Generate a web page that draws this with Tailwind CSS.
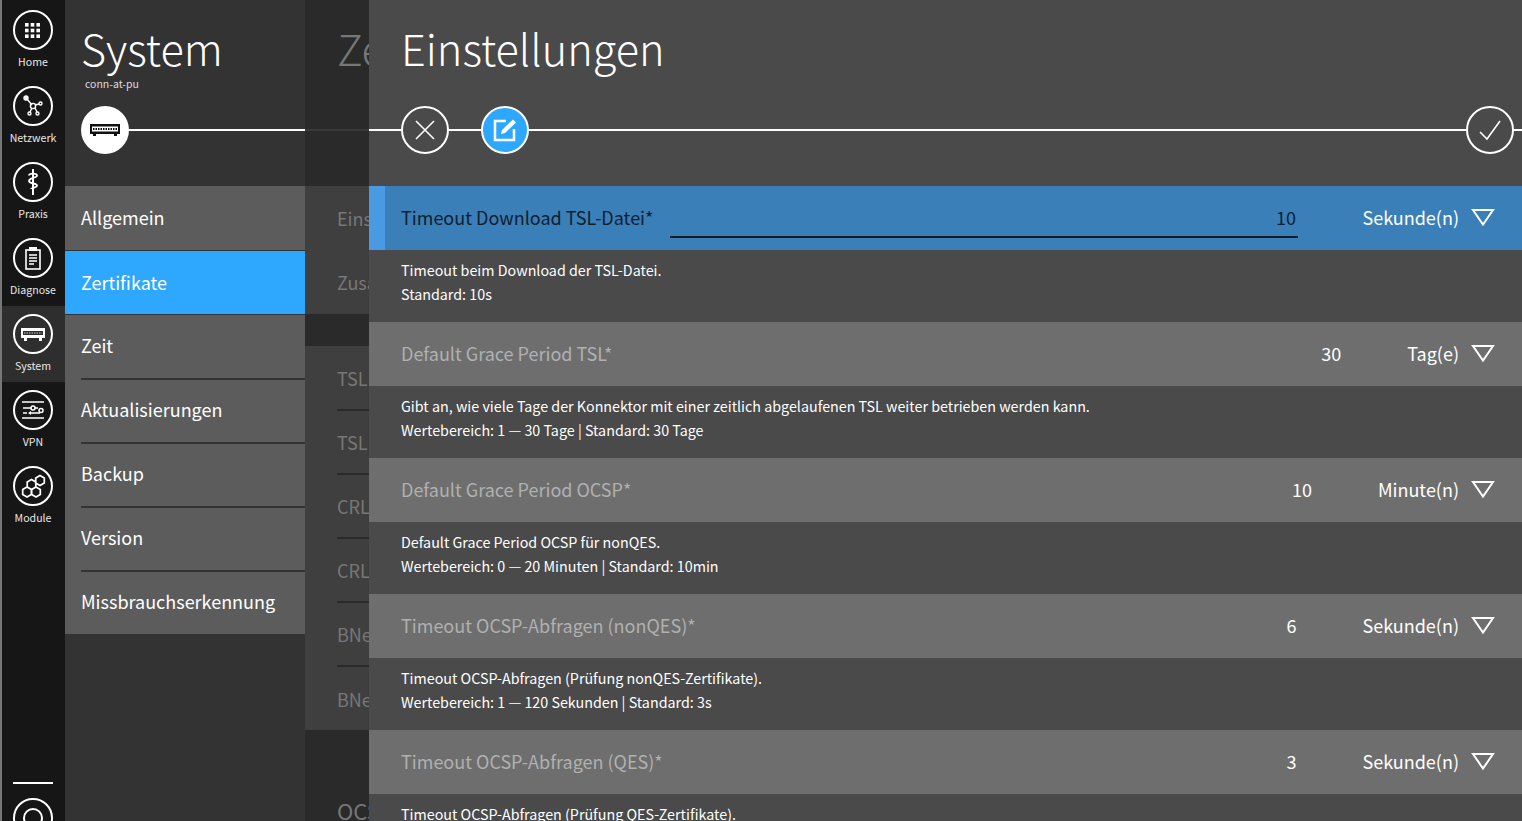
<!DOCTYPE html>
<html lang="en">
<head>
    <meta charset="UTF-8">
    <title>Einstellungen</title>
    <script src="https://cdn.jsdelivr.net/npm/@tailwindcss/browser@4"></script>
</head>
<body class="bg-[#161616] overflow-hidden font-['Noto_Sans_CJK_SC','Noto_Sans',sans-serif]">
<div class="flex h-[821px] w-[1522px] overflow-hidden">

    <!-- icon bar -->
    <nav class="w-[65px] shrink-0 bg-[#161616] border-l-2 border-[#777] pt-[2px] text-[#e8e8e8] overflow-hidden">
        <a class="flex flex-col items-center h-[76px] pt-2 -ml-[2px] text-[10.6px]">
            <span class="w-10 h-10 rounded-full border-2 border-white flex items-center justify-center">
                <svg width="15" height="15" viewBox="0 0 15 15" fill="#fff"><rect width="3.600" height="3.600"/><rect x="5.700" width="3.600" height="3.600"/><rect x="11.400" width="3.600" height="3.600"/><rect y="5.700" width="3.600" height="3.600"/><rect x="5.700" y="5.700" width="3.600" height="3.600"/><rect x="11.400" y="5.700" width="3.600" height="3.600"/><rect y="11.400" width="3.600" height="3.600"/><rect x="5.700" y="11.400" width="3.600" height="3.600"/><rect x="11.400" y="11.400" width="3.600" height="3.600"/></svg>
            </span>
            <span class="mt-1 pl-px leading-4">Home</span>
        </a>
        <a class="flex flex-col items-center h-[76px] pt-2 -ml-[2px] text-[10.6px]">
            <span class="w-10 h-10 rounded-full border-2 border-white flex items-center justify-center">
                <svg width="22" height="22" viewBox="0 0 22 22" fill="none" stroke="#fff" stroke-width="1.400"><path d="M5 4l5 6M13 10l4-1M10 13l-2 4M13 13l2 4"/><circle cx="4" cy="3" r="2" fill="#fff"/><circle cx="11" cy="11" r="2.600"/><circle cx="18.500" cy="8.500" r="1.500"/><circle cx="7.500" cy="18.500" r="1.500"/><circle cx="15.500" cy="18.500" r="1.500"/></svg>
            </span>
            <span class="mt-1 pl-px leading-4">Netzwerk</span>
        </a>
        <a class="flex flex-col items-center h-[76px] pt-2 -ml-[2px] text-[10.6px]">
            <span class="w-10 h-10 rounded-full border-2 border-white flex items-center justify-center">
                <svg width="12" height="26" viewBox="0 0 12 26" fill="none" stroke="#fff"><path d="M6 0v26" stroke-width="2"/><path d="M2 6.500c0-2.500 8-2.500 8 0s-8 2.500-8 5.500 8 2 8 4.500-6 2-6 3.500" stroke-width="1.800"/></svg>
            </span>
            <span class="mt-1 pl-px leading-4">Praxis</span>
        </a>
        <a class="flex flex-col items-center h-[76px] pt-2 -ml-[2px] text-[10.6px]">
            <span class="w-10 h-10 rounded-full border-2 border-white flex items-center justify-center">
                <svg width="16" height="23" viewBox="0 0 16 23" fill="none" stroke="#fff" stroke-width="1.600"><rect x="1" y="3" width="14" height="19"/><rect x="4" y="0" width="8" height="4" fill="#fff" stroke="none"/><path d="M4 8h8M4 11h8M4 14h8M4 17h5"/></svg>
            </span>
            <span class="mt-1 pl-px leading-4">Diagnose</span>
        </a>
        <a class="flex flex-col items-center h-[76px] pt-2 -ml-[2px] text-[10.6px] bg-[#2e2e2e]">
            <span class="w-10 h-10 rounded-full border-2 border-white flex items-center justify-center">
                <svg width="24" height="13" viewBox="0 0 24 13"><path d="M0 0h24v10h-3v3h-3v-3H6v3H3v-3H0z" fill="#fff"/><rect x="2" y="3" width="20" height="4" fill="#2e2e2e"/><path d="M3 5h18" stroke="#ccc" stroke-dasharray="1.500 1"/></svg>
            </span>
            <span class="mt-1 pl-px leading-4">System</span>
        </a>
        <a class="flex flex-col items-center h-[76px] pt-2 -ml-[2px] text-[10.6px]">
            <span class="w-10 h-10 rounded-full border-2 border-white flex items-center justify-center">
                <svg width="22" height="18" viewBox="0 0 22 18" fill="none" stroke="#fff" stroke-width="1.500"><path d="M0 1h22M0 17h22M1 7h8M13 7h3M1 12h4M9 12h9"/><path d="M9 10l-3 2 3 2" fill="#fff" stroke="none"/><circle cx="11" cy="7" r="2"/><circle cx="19" cy="9.500" r="2"/></svg>
            </span>
            <span class="mt-1 pl-px leading-4">VPN</span>
        </a>
        <a class="flex flex-col items-center h-[76px] pt-2 -ml-[2px] text-[10.6px]">
            <span class="w-10 h-10 rounded-full border-2 border-white flex items-center justify-center">
                <svg width="26" height="24" viewBox="0 0 26 24" fill="none" stroke="#fff" stroke-width="1.700"><path d="M20 1.500l4.300 2.500v5L20 11.500 15.700 9V4zM11.500 5.500l4.300 2.500v5l-4.300 2.500L7.200 13V8zM7 13l4.300 2.500v5L7 23 2.700 20.500v-5zM16 13l4.300 2.500v5L16 23l-4.300-2.500v-5z"/></svg>
            </span>
            <span class="mt-1 pl-px leading-4">Module</span>
        </a>
        <div class="mt-[248px] -ml-[2px] flex flex-col items-center">
            <div class="w-10 h-[2px] bg-white"></div>
            <span class="mt-[14px] w-10 h-10 rounded-full border-2 border-white flex items-center justify-center shrink-0">
                <span class="w-5 h-5 rounded-full border-2 border-white"></span>
            </span>
        </div>
    </nav>

    <!-- system column -->
    <section class="w-[240px] shrink-0 bg-[#333333] text-white">
        <h1 class="pl-4 pt-[21px] text-[43.2px] leading-[52px] font-extralight">System</h1>
        <p class="pl-5 mt-[3px] text-[10.5px] leading-4 text-[#ddd]">conn-at-pu</p>
        <div class="relative h-12 mt-[14px] flex items-center">
            <div class="absolute left-16 right-0 h-[2px] bg-white"></div>
            <span class="relative ml-4 w-12 h-12 rounded-full bg-white flex items-center justify-center">
                <svg width="30" height="14" viewBox="0 0 30 14"><path d="M0 1h30v10h-3v2h-3v-2H6v2H3v-2H0z" fill="#111"/><rect x="2" y="3.500" width="26" height="5" fill="#fff"/><path d="M3 6h24" stroke="#111" stroke-width="2" stroke-dasharray="1.500 1"/></svg>
            </span>
        </div>
        <ul class="mt-8 text-lg">
            <li class="h-16 pb-[2px] bg-[#5c5c5c] flex items-center pl-4">Allgemein</li>
            <li class="h-[63px] pb-[2px] bg-[#2ea8ff] flex items-center pl-4 mt-px">Zertifikate</li>
            <li class="bg-[#5c5c5c] pl-4 mt-px"><div class="h-[65px] pb-1 flex items-center border-b-2 border-[#333]">Zeit</div></li>
            <li class="bg-[#5c5c5c] pl-4"><div class="h-16 pb-1 flex items-center border-b-2 border-[#333]">Aktualisierungen</div></li>
            <li class="bg-[#5c5c5c] pl-4"><div class="h-16 pb-1 flex items-center border-b-2 border-[#333]">Backup</div></li>
            <li class="bg-[#5c5c5c] pl-4"><div class="h-16 pb-1 flex items-center border-b-2 border-[#333]">Version</div></li>
            <li class="bg-[#5c5c5c] pl-4"><div class="h-[62px] pb-1 flex items-center">Missbrauchserkennung</div></li>
        </ul>
    </section>

    <!-- covered column -->
    <section class="w-16 shrink-0 bg-[#2a2a2a] text-[#777] overflow-hidden whitespace-nowrap">
        <h2 class="pl-8 pt-[21px] text-[43.2px] leading-[52px] font-extralight">Zeit</h2>
        <div class="h-[2px] bg-[#3a3a3a] mt-[56px]"></div>
        <ul class="mt-[55px] text-lg bg-[#3f3f3f]">
            <li class="h-16 pl-8 flex items-center">Einstellungen</li>
            <li class="h-16 pl-8 flex items-center">Zusatz</li>
        </ul>
        <ul class="mt-8 text-lg bg-[#3f3f3f]">
            <li class="pl-8"><div class="h-[65px] flex items-center border-b-2 border-[#2a2a2a]">TSL</div></li>
            <li class="pl-8"><div class="h-16 flex items-center border-b-2 border-[#2a2a2a]">TSL</div></li>
            <li class="pl-8"><div class="h-16 flex items-center border-b-2 border-[#2a2a2a]">CRL</div></li>
            <li class="pl-8"><div class="h-16 flex items-center border-b-2 border-[#2a2a2a]">CRL</div></li>
            <li class="pl-8"><div class="h-16 flex items-center border-b-2 border-[#2a2a2a]">BNetzA</div></li>
            <li class="pl-8"><div class="h-[63px] flex items-center">BNetzA</div></li>
        </ul>
        <p class="pl-8 mt-16 text-[22px] leading-8">OCSP</p>
    </section>

    <!-- settings -->
    <main class="flex-1 bg-[#4a4a4a] text-white overflow-hidden">
        <h1 class="pl-8 pt-[21px] text-[43.2px] leading-[52px] font-extralight">Einstellungen</h1>
        <div class="relative h-12 mt-[33px] flex items-center">
            <div class="absolute left-0 right-0 h-[2px] bg-white"></div>
            <span class="relative ml-8 w-12 h-12 rounded-full border-2 border-white bg-[#4a4a4a] flex items-center justify-center">
                <svg width="22" height="22" viewBox="0 0 22 22" stroke="#fff" stroke-width="1.600"><path d="M2 2l18 18M20 2L2 20"/></svg>
            </span>
            <span class="relative ml-8 w-12 h-12 rounded-full border-2 border-white bg-[#2ea8ff] flex items-center justify-center">
                <svg width="24" height="24" viewBox="0 0 24 24" fill="none" stroke="#fff" stroke-width="2.500"><path d="M13 3H2v19h19V11"/><path d="M8 16l1-4L20 1.500l3 3L12 15z" fill="#fff" stroke="none"/></svg>
            </span>
            <span class="relative ml-auto mr-2 w-12 h-12 rounded-full border-2 border-white bg-[#4a4a4a] flex items-center justify-center">
                <svg width="24" height="22" viewBox="0 0 24 22" fill="none" stroke="#fff" stroke-width="1.600"><path d="M2 13l7 7L22 2"/></svg>
            </span>
        </div>

        <div class="mt-8 text-lg">
            <div class="h-16 pb-[2px] bg-[#3a7fb8] border-l-16 border-[#4a9ae3] pl-4 pr-[27px] flex items-center">
                <span class="text-[#10202e]">Timeout Download TSL-Datei*</span>
                <span class="ml-[17px] mt-[2px] flex-1 h-10 border-b-2 border-[#0f1a24] text-[#10202e] text-right pr-[2px] leading-[38px]">10</span>
                <span class="w-[173px] text-right pr-3">Sekunde(n)</span>
                <svg width="24" height="18" viewBox="0 0 24 18" fill="none" stroke="#fff" stroke-width="2"><path d="M2 2h20L12 16.500z"/></svg>
            </div>
            <div class="h-[72px] pl-8 pt-2 text-[14.3px] leading-6">
                <p>Timeout beim Download der TSL-Datei.</p>
                <p>Standard: 10s</p>
            </div>

            <div class="h-16 pb-[2px] bg-[#6e6e6e] pl-8 pr-[27px] flex items-center">
                <span class="flex-1 text-[#b0b0b0]">Default Grace Period TSL*</span>
                <span class="mr-[66px]">30</span>
                <span class="pr-3">Tag(e)</span>
                <svg width="24" height="18" viewBox="0 0 24 18" fill="none" stroke="#fff" stroke-width="2"><path d="M2 2h20L12 16.500z"/></svg>
            </div>
            <div class="h-[72px] pl-8 pt-2 text-[14.3px] leading-6">
                <p>Gibt an, wie viele Tage der Konnektor mit einer zeitlich abgelaufenen TSL weiter betrieben werden kann.</p>
                <p>Wertebereich: 1 — 30 Tage | Standard: 30 Tage</p>
            </div>

            <div class="h-16 pb-[2px] bg-[#6e6e6e] pl-8 pr-[27px] flex items-center">
                <span class="flex-1 text-[#b0b0b0]">Default Grace Period OCSP*</span>
                <span class="mr-[66px]">10</span>
                <span class="pr-3">Minute(n)</span>
                <svg width="24" height="18" viewBox="0 0 24 18" fill="none" stroke="#fff" stroke-width="2"><path d="M2 2h20L12 16.500z"/></svg>
            </div>
            <div class="h-[72px] pl-8 pt-2 text-[14.3px] leading-6">
                <p>Default Grace Period OCSP für nonQES.</p>
                <p>Wertebereich: 0 — 20 Minuten | Standard: 10min</p>
            </div>

            <div class="h-16 pb-[2px] bg-[#6e6e6e] pl-8 pr-[27px] flex items-center">
                <span class="flex-1 text-[#b0b0b0]">Timeout OCSP-Abfragen (nonQES)*</span>
                <span class="mr-[66px]">6</span>
                <span class="pr-3">Sekunde(n)</span>
                <svg width="24" height="18" viewBox="0 0 24 18" fill="none" stroke="#fff" stroke-width="2"><path d="M2 2h20L12 16.500z"/></svg>
            </div>
            <div class="h-[72px] pl-8 pt-2 text-[14.3px] leading-6">
                <p>Timeout OCSP-Abfragen (Prüfung nonQES-Zertifikate).</p>
                <p>Wertebereich: 1 — 120 Sekunden | Standard: 3s</p>
            </div>

            <div class="h-16 pb-[2px] bg-[#6e6e6e] pl-8 pr-[27px] flex items-center">
                <span class="flex-1 text-[#b0b0b0]">Timeout OCSP-Abfragen (QES)*</span>
                <span class="mr-[66px]">3</span>
                <span class="pr-3">Sekunde(n)</span>
                <svg width="24" height="18" viewBox="0 0 24 18" fill="none" stroke="#fff" stroke-width="2"><path d="M2 2h20L12 16.500z"/></svg>
            </div>
            <div class="h-[72px] pl-8 pt-2 text-[14.3px] leading-6">
                <p>Timeout OCSP-Abfragen (Prüfung QES-Zertifikate).</p>
            </div>
        </div>
    </main>
</div>
</body>
</html>
